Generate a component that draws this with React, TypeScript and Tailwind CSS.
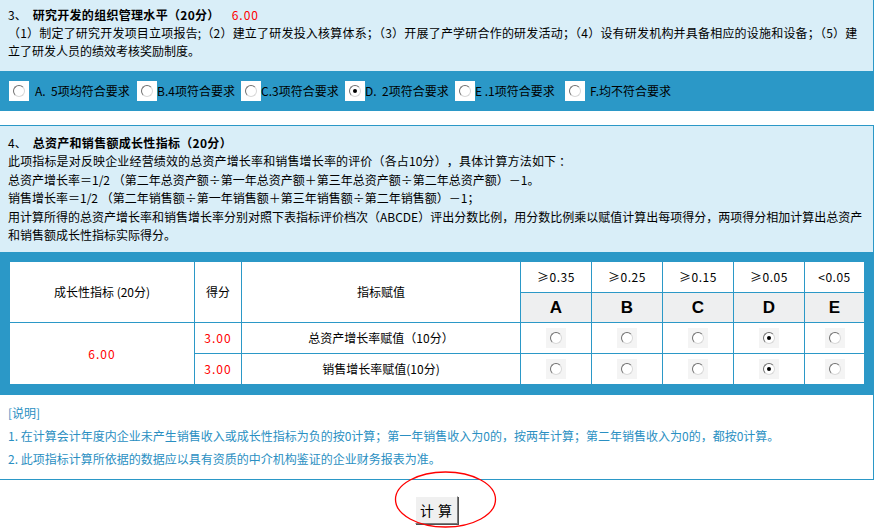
import React from "react";

function Radio({ checked = false, box = "bg-white" }: { checked?: boolean; box?: string }) {
  return (
    <span className={`inline-flex w-[20px] h-[20px] items-center justify-center shrink-0 ${box}`}>
      <span className="relative w-[12px] h-[12px] rounded-full bg-white border border-t-[#6f6f6f] border-l-[#6f6f6f] border-r-[#d8d8d8] border-b-[#d8d8d8] flex items-center justify-center">
        {checked && <span className="w-[4px] h-[4px] rounded-full bg-black" />}
      </span>
    </span>
  );
}

const options = [
  { label: "A.  5项均符合要求", w: "w-[128px]", pl: "pl-[6px]", checked: false },
  { label: "B.4项符合要求", w: "w-[104px]", pl: "pl-0", checked: false },
  { label: "C.3项符合要求", w: "w-[104px]", pl: "pl-0", checked: false },
  { label: "D.  2项符合要求", w: "w-[110px]", pl: "pl-0", checked: true },
  { label: "E .1项符合要求", w: "w-[110px]", pl: "pl-0", checked: false },
  { label: "F.均不符合要求", w: "w-[140px]", pl: "pl-[5px]", checked: false },
];

const grades = [
  { t: "≥0.35", l: "A" },
  { t: "≥0.25", l: "B" },
  { t: "≥0.15", l: "C" },
  { t: "≥0.05", l: "D" },
  { t: "<0.05", l: "E" },
];

export default function App() {
  const cell = "border border-[#2b98c7] text-center align-middle p-0";
  return (
    <div
      className="relative w-[874px] h-[530px] bg-white text-black text-[12px] overflow-hidden"
      style={{ fontFamily: '"Noto Sans CJK SC", "Noto Sans", sans-serif' }}
    >
      {/* Section 3 */}
      <div className="h-[71px] bg-[#d9eef8] border-r border-[#2b98c7] pl-[8px] pt-[6px] leading-[18px]">
        <div className="whitespace-nowrap">
          <span>3、</span>
          <span className="ml-[6px] font-bold tracking-[0.3px]">研究开发的组织管理水平（20分）</span>
          <span className="ml-[12px] text-[#ff0000] tracking-[1px]">6.00</span>
        </div>
        <div className="whitespace-nowrap tracking-[0.2px]">
          （1）制定了研究开发项目立项报告;（2）建立了研发投入核算体系；（3）开展了产学研合作的研发活动；（4）设有研发机构并具备相应的设施和设备；（5）建
        </div>
        <div className="whitespace-nowrap">立了研发人员的绩效考核奖励制度。</div>
      </div>

      {/* Options bar */}
      <div className="h-[40px] bg-[#2b98c7] flex items-center pl-[9px]">
        {options.map((o) => (
          <div key={o.label} className={`flex items-center ${o.w}`}>
            <Radio checked={o.checked} />
            <span className={`whitespace-pre ${o.pl}`}>{o.label}</span>
          </div>
        ))}
      </div>

      <div className="h-[14px]" />

      {/* Section 4 */}
      <div className="h-[127px] bg-[#d9eef8] border-t border-r border-[#2b98c7] pl-[8px] pt-[8px] leading-[18.4px]">
        <div className="whitespace-nowrap">
          <span>4、</span>
          <span className="ml-[6px] font-bold tracking-[0.3px]">总资产和销售额成长性指标（20分）</span>
        </div>
        <div className="whitespace-nowrap tracking-[0.15px] [text-spacing-trim:space-all]">
          此项指标是对反映企业经营绩效的总资产增长率和销售增长率的评价（各占10分），具体计算方法如下 ：
        </div>
        <div className="whitespace-nowrap">
          总资产增长率＝1/2 （第二年总资产额÷第一年总资产额＋第三年总资产额÷第二年总资产额）－1。
        </div>
        <div className="whitespace-nowrap">
          销售增长率＝1/2 （第二年销售额÷第一年销售额＋第三年销售额÷第二年销售额）－1；
        </div>
        <div className="whitespace-nowrap">
          用计算所得的总资产增长率和销售增长率分别对照下表指标评价档次（ABCDE）评出分数比例，用分数比例乘以赋值计算出每项得分，两项得分相加计算出总资产
        </div>
        <div className="whitespace-nowrap">和销售额成长性指标实际得分。</div>
      </div>

      {/* Table frame */}
      <div className="h-[143px] bg-[#2b98c7] pl-[9px] pt-[9px]">
        <table className="table-fixed border-collapse bg-white w-[855px]">
          <colgroup>
            <col className="w-[185px]" />
            <col className="w-[47px]" />
            <col className="w-[279px]" />
            <col className="w-[71px]" />
            <col className="w-[71px]" />
            <col className="w-[71px]" />
            <col className="w-[71px]" />
            <col className="w-[60px]" />
          </colgroup>
          <tbody>
            <tr className="h-[31px]">
              <td rowSpan={2} className={cell}>成长性指标 (20分)</td>
              <td rowSpan={2} className={cell}>得分</td>
              <td rowSpan={2} className={cell}>指标赋值</td>
              {grades.map((g) => (
                <td key={g.t} className={`${cell} tracking-[0.5px]`}>{g.t}</td>
              ))}
            </tr>
            <tr className="h-[30px]">
              {grades.map((g) => (
                <td
                  key={g.l}
                  className={`${cell} bg-[#eeeff0] text-[17px] font-bold`}
                  style={{ fontFamily: '"Liberation Sans", Arial, sans-serif' }}
                >
                  {g.l}
                </td>
              ))}
            </tr>
            <tr className="h-[31px]">
              <td rowSpan={2} className={`${cell} text-[#ff0000] tracking-[1px]`}>6.00</td>
              <td className={`${cell} text-[#ff0000] tracking-[1px]`}>3.00</td>
              <td className={cell}>总资产增长率赋值（10分）</td>
              {grades.map((g) => (
                <td key={g.l} className={cell}>
                  <span className="inline-flex align-middle">
                    <Radio checked={g.l === "D"} box="bg-[#f4f4f4]" />
                  </span>
                </td>
              ))}
            </tr>
            <tr className="h-[31px]">
              <td className={`${cell} text-[#ff0000] tracking-[1px]`}>3.00</td>
              <td className={cell}>销售增长率赋值(10分)</td>
              {grades.map((g) => (
                <td key={g.l} className={cell}>
                  <span className="inline-flex align-middle">
                    <Radio checked={g.l === "D"} box="bg-[#f4f4f4]" />
                  </span>
                </td>
              ))}
            </tr>
          </tbody>
        </table>
      </div>

      {/* Notes */}
      <div className="h-[85px] bg-white border-r border-b border-[#2b98c7] pl-[8px] pt-[6px] leading-[23px] text-[#2a8fc2]">
        <div>[说明]</div>
        <div className="whitespace-nowrap">
          1. 在计算会计年度内企业未产生销售收入或成长性指标为负的按0计算；第一年销售收入为0的，按两年计算；第二年销售收入为0的，都按0计算。
        </div>
        <div className="whitespace-nowrap">2. 此项指标计算所依据的数据应以具有资质的中介机构鉴证的企业财务报表为准。</div>
      </div>

      {/* Button */}
      <div className="flex justify-center pt-[16px] pr-[2px]">
        <button className="w-[43px] h-[28px] bg-[#f0f0f0] border border-t-white border-l-white border-r-[#7a7a7a] border-b-[#7a7a7a] shadow-[1px_1px_0_#505050] text-[14px] leading-none text-black tracking-[4px] pl-[4px]">
          计算
        </button>
      </div>

      {/* Red ellipse annotation */}
      <svg className="absolute left-[394px] top-[471px]" width="103" height="58" viewBox="0 0 103 58">
        <ellipse cx="51.5" cy="28.5" rx="50" ry="27.5" fill="none" stroke="#ff0000" strokeWidth="1.3" />
      </svg>
    </div>
  );
}
